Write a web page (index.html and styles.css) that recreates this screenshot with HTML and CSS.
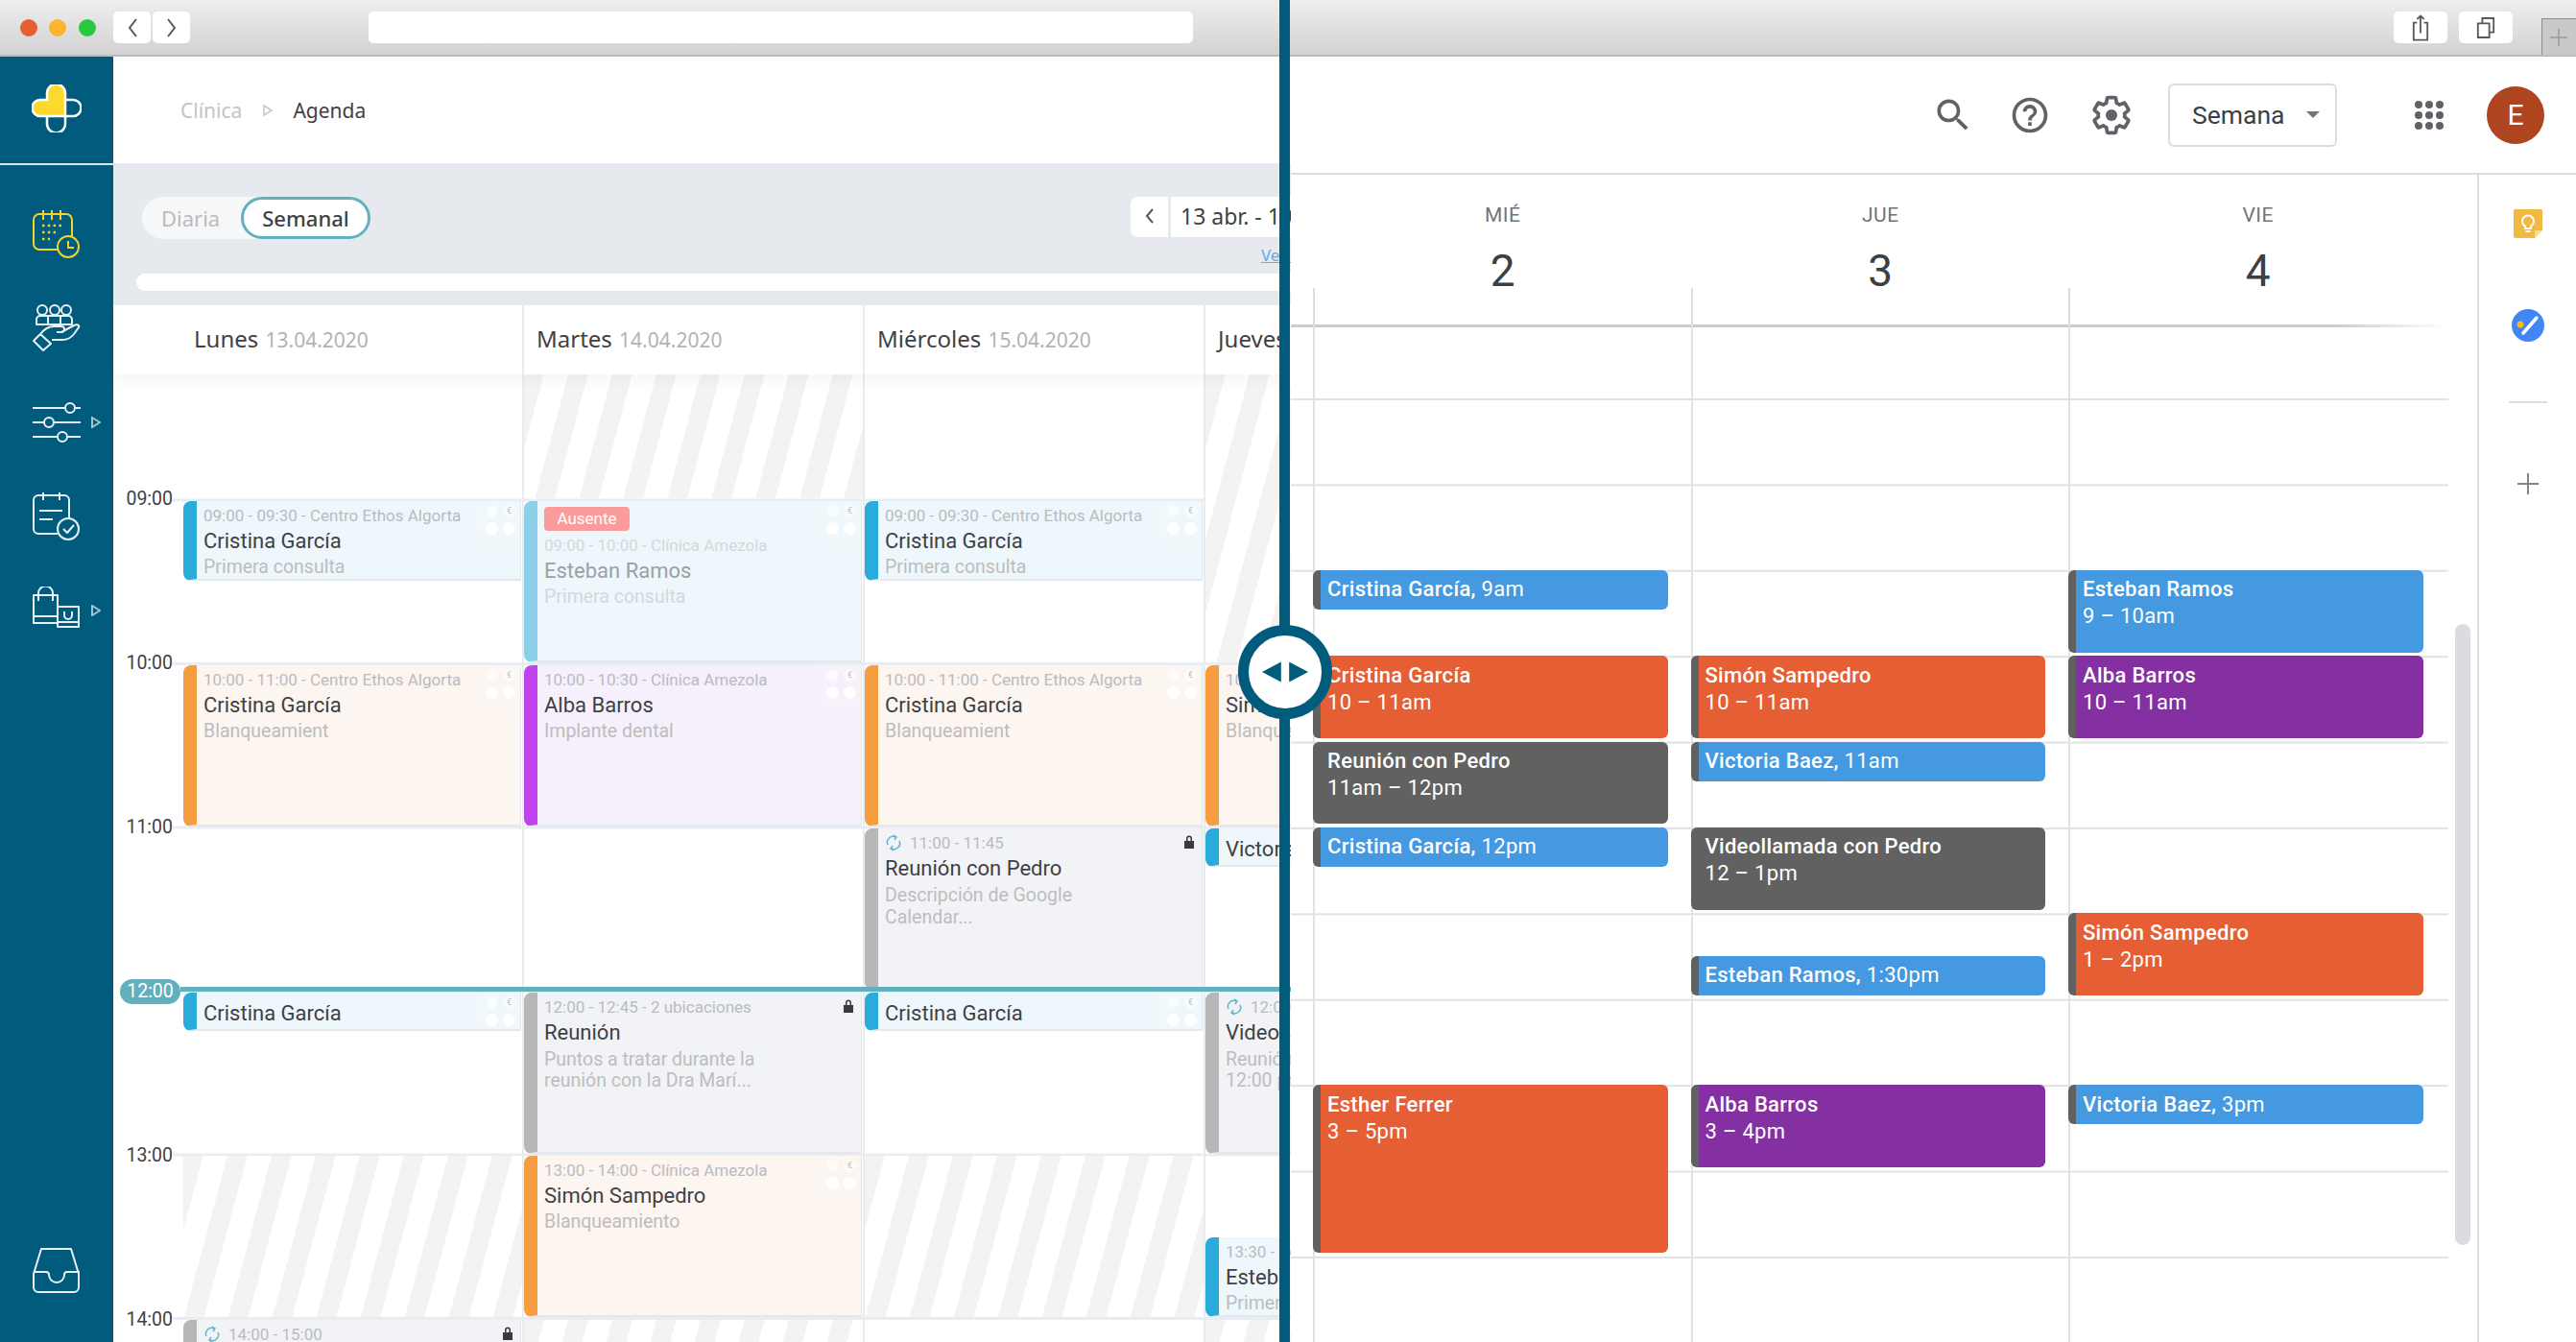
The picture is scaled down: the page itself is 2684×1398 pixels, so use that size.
FILE: index.html
```html
<!DOCTYPE html>
<html lang="es">
<head>
  <meta charset="UTF-8">
  <title>Agenda</title>
  <link rel="stylesheet" href="styles.css">
</head>
<body>
<div class="window">
  <!-- Browser chrome -->
  <div class="chrome">
    <span class="light red"></span><span class="light yellow"></span><span class="light green"></span>
    <div class="nav-btns">
      <button class="chrome-btn narrow"><svg width="14" height="24" viewBox="0 0 14 24"><path d="M11 3 4 12l7 9"/></svg></button>
      <button class="chrome-btn narrow"><svg width="14" height="24" viewBox="0 0 14 24"><path d="M3 3l7 9-7 9"/></svg></button>
    </div>
    <div class="address"></div>
    <button class="chrome-btn wide share"><svg width="18" height="30" viewBox="0 0 20 32"><path d="M6 10H2v20h16V10h-4M10 22V2M6 6l4-4 4 4"/></svg></button>
    <button class="chrome-btn wide tabs"><svg width="20" height="26" viewBox="0 0 22 28"><path d="M2 9h13v16H2zM7 9V3h13v16h-5"/></svg></button>
    <div class="new-tab"><svg width="20" height="20" viewBox="0 0 20 20"><path d="M10 1v18M1 10h18"/></svg></div>
  </div>

  <div class="panels">
    <!-- Clinic agenda -->
    <section class="clinic">
      <aside class="sidebar">
        <div class="logo-box">
          <svg width="52" height="50" viewBox="0 0 52 50" class="logo">
            <path class="logo-lines" d="M35 16h8a8.5 8.5 0 0 1 0 17H35M16 33v8a9.5 9.5 0 0 0 19 0V33"/>
            <path class="logo-heart" d="M35 33H9a8.5 8.5 0 0 1 0-17h7V9a9.5 9.5 0 0 1 19 0z"/>
          </svg>
        </div>
        <nav class="side-nav">
          <div class="nav-item">
            <svg class="ico yellow-ico" width="50" height="50" viewBox="0 0 50 50">
              <path d="M26 41H7a6 6 0 0 1-6-6V10a6 6 0 0 1 6-6h28a6 6 0 0 1 6 6v18M11 0v10M20 0v10M29 0v10"/>
              <path class="dash" d="M10 16h20M10 23h14M10 30h8"/>
              <circle cx="37" cy="38" r="11"/><path d="M37 32v7h6"/>
            </svg>
          </div>
          <div class="nav-item">
            <svg class="ico" width="50" height="50" viewBox="0 0 50 50">
              <circle cx="10" cy="6" r="5"/><circle cx="23" cy="6" r="5"/><circle cx="35" cy="6" r="5"/>
              <path d="M4 21v-5a4 4 0 0 1 4-4h29a4 4 0 0 1 4 4v5zM16 12v9M29 12v9"/>
              <path d="M1 38l7-7 11 10-8 7zM8 31c4-5 9-8 14-8h8c2 0 3 1 3 3s-1 3-3 3h-5M30 29l13-7c3-2 6 0 5 2l-5 7c-3 4-7 6-12 6H20"/>
            </svg>
          </div>
          <div class="nav-item">
            <svg class="ico" width="50" height="50" viewBox="0 0 50 50">
              <path d="M0 10h34M44 10h6M0 25h12M22 25h28M0 40h26M36 40h14"/>
              <circle cx="39" cy="10" r="5"/><circle cx="17" cy="25" r="5"/><circle cx="31" cy="40" r="5"/>
            </svg>
            <svg class="nav-arrow" width="10" height="12" viewBox="0 0 10 12"><path d="M1 1l8 5-8 5z"/></svg>
          </div>
          <div class="nav-item">
            <svg class="ico" width="50" height="50" viewBox="0 0 50 50">
              <path d="M26 43H6a5 5 0 0 1-5-5V8a5 5 0 0 1 5-5h27a5 5 0 0 1 5 5v19M11 0v8M28 0v8M7 19h24M7 28h14"/>
              <circle cx="37" cy="38" r="11"/><path d="M32 38l4 4 7-8"/>
            </svg>
          </div>
          <div class="nav-item">
            <svg class="ico" width="50" height="50" viewBox="0 3 50 50">
              <path d="M26 12H1v29h24M1 34h24M6 18v-8a7.5 7.5 0 0 1 15 0v8M6 12h20v12"/>
              <path d="M26 24h22v21H26zM26 40h22M33 29v4a4 4 0 0 0 8 0v-4"/>
            </svg>
            <svg class="nav-arrow" width="10" height="12" viewBox="0 0 10 12"><path d="M1 1l8 5-8 5z"/></svg>
          </div>
        </nav>
        <div class="nav-bottom">
          <svg class="ico" width="50" height="50" viewBox="0 0 50 50">
            <path d="M9 1h31l8 26v14a5 5 0 0 1-5 5H6a5 5 0 0 1-5-5V27z"/>
            <path d="M1 25h13c2 0 3 1 3 3a8 8 0 0 0 16 0c0-2 1-3 3-3h13"/>
          </svg>
          <div class="nav-peek"></div>
        </div>
      </aside>

      <div class="clinic-main">
        <header class="crumbs">
          <span class="crumb-muted">Clínica</span>
          <svg class="crumb-arrow" width="10" height="12" viewBox="0 0 10 12"><path d="M1 1l8 5-8 5z"/></svg>
          <span class="crumb-current">Agenda</span>
        </header>

        <div class="toolbar">
          <div class="toolbar-row">
            <div class="toggle">
              <span class="toggle-off">Diaria</span>
              <span class="toggle-on">Semanal</span>
            </div>
            <div class="week-nav">
              <div class="week-btns">
                <button class="week-prev"><svg width="12" height="20" viewBox="0 0 12 20"><path d="M9 3 3 10l6 7"/></svg></button>
                <div class="week-label">13 abr. - 19 abr.</div>
              </div>
              <a class="week-link">Ver agenda</a>
            </div>
          </div>
          <div class="h-scroll"></div>
        </div>

        <div class="week-head">
          <div class="wh first">Lunes <small>13.04.2020</small></div>
          <div class="wh">Martes <small>14.04.2020</small></div>
          <div class="wh">Miércoles <small>15.04.2020</small></div>
          <div class="wh">Jueves <small>16.04.2020</small></div>
        </div>

        <div class="week-body">
          <div class="hours">
            <div class="hour first">09:00</div>
            <div class="hour">10:00</div>
            <div class="hour">11:00</div>
            <div class="hour"><span class="now-pill">12:00</span></div>
            <div class="hour">13:00</div>
            <div class="hour">14:00</div>
          </div>

          <!-- Lunes -->
          <div class="day">
            <div class="ev cyan" style="grid-row:2/4">
              <div class="ev-time">09:00 - 09:30 - Centro Ethos Algorta</div>
              <div class="ev-name">Cristina García</div>
              <div class="ev-sub">Primera consulta</div>
              <div class="dots"><i class="d-ring"></i><i>€</i><i></i><i></i></div>
            </div>
            <div class="ev orange" style="grid-row:6/10">
              <div class="ev-time">10:00 - 11:00 - Centro Ethos Algorta</div>
              <div class="ev-name">Cristina García</div>
              <div class="ev-sub">Blanqueamient</div>
              <div class="dots"><i class="d-ring"></i><i>€</i><i></i><i></i></div>
            </div>
            <div class="ev cyan single" style="grid-row:14/15">
              <div class="ev-name">Cristina García</div>
              <div class="dots"><i class="d-ring"></i><i>€</i><i></i><i></i></div>
            </div>
            <div class="off" style="grid-row:18/22"></div>
            <div class="ev grey" style="grid-row:22/26">
              <div class="ev-time"><svg class="sync" width="18" height="18" viewBox="0 0 18 18"><path d="M3 11a6 6 0 0 1 8-8M15 7a6 6 0 0 1-8 8M9 1l3 2-2 3M9 17l-3-2 2-3"/></svg>14:00 - 15:00</div>
              <svg class="lock" width="12" height="16" viewBox="0 0 12 16"><path d="M3 7V4.5a3 3 0 0 1 6 0V7h2v8H1V7zM4.5 7h3V4.5a1.5 1.5 0 0 0-3 0z"/></svg>
            </div>
          </div>

          <!-- Martes -->
          <div class="day">
            <div class="off" style="grid-row:1/2"></div>
            <div class="ev cyan faded" style="grid-row:2/6">
              <span class="badge">Ausente</span>
              <div class="ev-time">09:00 - 10:00 - Clínica Amezola</div>
              <div class="ev-name">Esteban Ramos</div>
              <div class="ev-sub">Primera consulta</div>
              <div class="dots"><i class="d-ring"></i><i>€</i><i></i><i></i></div>
            </div>
            <div class="ev purple" style="grid-row:6/10">
              <div class="ev-time">10:00 - 10:30 - Clínica Amezola</div>
              <div class="ev-name">Alba Barros</div>
              <div class="ev-sub">Implante dental</div>
              <div class="dots"><i class="d-ring"></i><i>€</i><i></i><i></i></div>
            </div>
            <div class="ev grey" style="grid-row:14/18">
              <div class="ev-time">12:00 - 12:45 - 2 ubicaciones</div>
              <div class="ev-name">Reunión</div>
              <div class="ev-desc">Puntos a tratar durante la<br>reunión con la Dra Marí...</div>
              <svg class="lock" width="12" height="16" viewBox="0 0 12 16"><path d="M3 7V4.5a3 3 0 0 1 6 0V7h2v8H1V7zM4.5 7h3V4.5a1.5 1.5 0 0 0-3 0z"/></svg>
            </div>
            <div class="ev orange" style="grid-row:18/22">
              <div class="ev-time">13:00 - 14:00 - Clínica Amezola</div>
              <div class="ev-name">Simón Sampedro</div>
              <div class="ev-sub">Blanqueamiento</div>
              <div class="dots"><i class="d-ring"></i><i>€</i><i></i><i></i></div>
            </div>
            <div class="off" style="grid-row:22/26"></div>
          </div>

          <!-- Miércoles -->
          <div class="day">
            <div class="ev cyan" style="grid-row:2/4">
              <div class="ev-time">09:00 - 09:30 - Centro Ethos Algorta</div>
              <div class="ev-name">Cristina García</div>
              <div class="ev-sub">Primera consulta</div>
              <div class="dots"><i class="d-ring"></i><i>€</i><i></i><i></i></div>
            </div>
            <div class="ev orange" style="grid-row:6/10">
              <div class="ev-time">10:00 - 11:00 - Centro Ethos Algorta</div>
              <div class="ev-name">Cristina García</div>
              <div class="ev-sub">Blanqueamient</div>
              <div class="dots"><i class="d-ring"></i><i>€</i><i></i><i></i></div>
            </div>
            <div class="ev grey" style="grid-row:10/14">
              <div class="ev-time"><svg class="sync" width="18" height="18" viewBox="0 0 18 18"><path d="M3 11a6 6 0 0 1 8-8M15 7a6 6 0 0 1-8 8M9 1l3 2-2 3M9 17l-3-2 2-3"/></svg>11:00 - 11:45</div>
              <div class="ev-name">Reunión con Pedro</div>
              <div class="ev-desc">Descripción de Google<br>Calendar...</div>
              <svg class="lock" width="12" height="16" viewBox="0 0 12 16"><path d="M3 7V4.5a3 3 0 0 1 6 0V7h2v8H1V7zM4.5 7h3V4.5a1.5 1.5 0 0 0-3 0z"/></svg>
            </div>
            <div class="ev cyan single" style="grid-row:14/15">
              <div class="ev-name">Cristina García</div>
              <div class="dots"><i class="d-ring"></i><i>€</i><i></i><i></i></div>
            </div>
            <div class="off" style="grid-row:18/22"></div>
          </div>

          <!-- Jueves -->
          <div class="day">
            <div class="off" style="grid-row:1/6"></div>
            <div class="ev orange" style="grid-row:6/10">
              <div class="ev-time">10:00 - 11:00 - Centro Ethos Algorta</div>
              <div class="ev-name">Simón Sampedro</div>
              <div class="ev-sub">Blanqueamiento</div>
            </div>
            <div class="ev cyan single" style="grid-row:10/11">
              <div class="ev-name">Victoria Baez</div>
            </div>
            <div class="ev grey" style="grid-row:14/18">
              <div class="ev-time"><svg class="sync" width="18" height="18" viewBox="0 0 18 18"><path d="M3 11a6 6 0 0 1 8-8M15 7a6 6 0 0 1-8 8M9 1l3 2-2 3M9 17l-3-2 2-3"/></svg>12:00 - 13:00</div>
              <div class="ev-name">Videollamada con Pedro</div>
              <div class="ev-desc">Reunión con Pedro<br>12:00 pm</div>
            </div>
            <div class="ev cyan" style="grid-row:20/22">
              <div class="ev-time">13:30 - 14:00</div>
              <div class="ev-name">Esteban Ramos</div>
              <div class="ev-sub">Primera consulta</div>
            </div>
            <div class="off" style="grid-row:22/26"></div>
          </div>

          <div class="now-line"></div>
        </div>
      </div>
    </section>

    <!-- Google calendar -->
    <section class="gcal">
      <header class="gcal-top">
        <svg class="g-ico" width="44" height="44" viewBox="0 0 24 24"><path d="M15.5 14h-.79l-.28-.27C15.41 12.59 16 11.11 16 9.5 16 5.91 13.09 3 9.5 3S3 5.91 3 9.5 5.91 16 9.5 16c1.61 0 3.09-.59 4.23-1.57l.27.28v.79l5 4.99L20.49 19l-4.99-5zm-6 0C7.01 14 5 11.99 5 9.5S7.01 5 9.5 5 14 7.01 14 9.5 11.99 14 9.5 14z"/></svg>
        <svg class="g-ico help" width="44" height="44" viewBox="0 0 24 24"><path d="M11 18h2v-2h-2v2zm1-16C6.48 2 2 6.48 2 12s4.48 10 10 10 10-4.48 10-10S17.52 2 12 2zm0 18c-4.41 0-8-3.59-8-8s3.59-8 8-8 8 3.59 8 8-3.59 8-8 8zm0-14c-2.21 0-4 1.79-4 4h2c0-1.1.9-2 2-2s2 .9 2 2c0 2-3 1.75-3 5h2c0-2.25 3-2.5 3-5 0-2.21-1.79-4-4-4z"/></svg>
        <svg class="g-ico gear" width="44" height="44" viewBox="0 0 24 24"><path class="gear-out" d="M19.43 12.98c.04-.32.07-.64.07-.98s-.03-.66-.07-.98l2.11-1.65c.19-.15.24-.42.12-.64l-2-3.46c-.12-.22-.39-.3-.61-.22l-2.49 1c-.52-.4-1.08-.73-1.69-.98l-.38-2.65C14.46 2.18 14.25 2 14 2h-4c-.25 0-.46.18-.49.42l-.38 2.65c-.61.25-1.17.59-1.69.98l-2.49-1c-.23-.09-.49 0-.61.22l-2 3.46c-.13.22-.07.49.12.64l2.11 1.65c-.04.32-.07.65-.07.98s.03.66.07.98l-2.11 1.65c-.19.15-.24.42-.12.64l2 3.46c.12.22.39.3.61.22l2.49-1c.52.4 1.08.73 1.69.98l.38 2.65c.03.24.24.42.49.42h4c.25 0 .46-.18.49-.42l.38-2.65c.61-.25 1.17-.59 1.69-.98l2.49 1c.23.09.49 0 .61-.22l2-3.46c.12-.22.07-.49-.12-.64l-2.11-1.65z"/><circle cx="12" cy="12" r="3.3"/></svg>
        <div class="view-select">Semana<span class="caret"></span></div>
        <div class="apps"><i></i><i></i><i></i><i></i><i></i><i></i><i></i><i></i><i></i></div>
        <div class="avatar">E</div>
      </header>

      <div class="gcal-main">
        <div class="gcal-grid">
          <div class="g-heads">
            <div class="g-head"><span>MIÉ</span><b>2</b></div>
            <div class="g-head"><span>JUE</span><b>3</b></div>
            <div class="g-head"><span>VIE</span><b>4</b></div>
          </div>
          <div class="g-body">
            <div class="g-rows">
              <div class="g-col">
                <div class="g-ev blue" style="grid-row:10/12"><b>Cristina García,</b> 9am</div>
                <div class="g-ev red" style="grid-row:14/18"><b>Cristina García</b><br>10 – 11am</div>
                <div class="g-ev dark" style="grid-row:18/22"><b>Reunión con Pedro</b><br>11am – 12pm</div>
                <div class="g-ev blue" style="grid-row:22/24"><b>Cristina García,</b> 12pm</div>
                <div class="g-ev red" style="grid-row:34/42"><b>Esther Ferrer</b><br>3 – 5pm</div>
              </div>
              <div class="g-col">
                <div class="g-ev red" style="grid-row:14/18"><b>Simón Sampedro</b><br>10 – 11am</div>
                <div class="g-ev blue" style="grid-row:18/20"><b>Victoria Baez,</b> 11am</div>
                <div class="g-ev dark" style="grid-row:22/26"><b>Videollamada con Pedro</b><br>12 – 1pm</div>
                <div class="g-ev blue" style="grid-row:28/30"><b>Esteban Ramos,</b> 1:30pm</div>
                <div class="g-ev violet" style="grid-row:34/38"><b>Alba Barros</b><br>3 – 4pm</div>
              </div>
              <div class="g-col">
                <div class="g-ev blue" style="grid-row:10/14"><b>Esteban Ramos</b><br>9 – 10am</div>
                <div class="g-ev violet" style="grid-row:14/18"><b>Alba Barros</b><br>10 – 11am</div>
                <div class="g-ev red" style="grid-row:26/30"><b>Simón Sampedro</b><br>1 – 2pm</div>
                <div class="g-ev blue" style="grid-row:34/36"><b>Victoria Baez,</b> 3pm</div>
              </div>
            </div>
            <div class="g-scroll"></div>
          </div>
        </div>

        <aside class="g-side">
          <svg width="30" height="30" viewBox="0 0 30 30" class="keep">
            <path class="keep-note" d="M2 0h26a2 2 0 0 1 2 2v20l-8 8H2a2 2 0 0 1-2-2V2a2 2 0 0 1 2-2z"/>
            <path class="keep-fold" d="M30 22h-8v8z"/>
            <path class="keep-bulb" d="M12 20v-2.5c-2-1.2-3-3-3-5a6 6 0 0 1 12 0c0 2-1 3.8-3 5V20zM12.5 23h5"/>
          </svg>
          <svg width="34" height="34" viewBox="0 0 34 34" class="tasks">
            <circle class="tasks-bg" cx="17" cy="17" r="17"/>
            <circle class="tasks-dot" cx="9" cy="16" r="3.5"/>
            <path class="tasks-tick" d="M12 25 26 9"/>
          </svg>
          <div class="side-rule"></div>
          <svg width="24" height="24" viewBox="0 0 24 24" class="side-plus"><path d="M12 1v22M1 12h22"/></svg>
        </aside>
      </div>
    </section>

    <!-- Before / after slider -->
    <div class="divider"></div>
    <div class="handle">
      <svg width="48" height="24" viewBox="0 0 46 22"><path d="M0 11 19 1v20zM27 1l19 10-19 10z"/></svg>
    </div>
  </div>
</div>
</body>
</html>
```

FILE: styles.css
```css
/* Side by side agenda comparison */
* {
  box-sizing: border-box;
}
body {
  margin: 0;
  background: #fff;
  color: #3f4144;
  font-family: "Noto Sans", sans-serif;
  overflow: hidden;
}
.window {
  width: 2684px;
  height: 1398px;
  display: flex;
  flex-direction: column;
  overflow: hidden;
}

/* browser chrome */
.chrome {
  height: 59px;
  flex: none;
  display: flex;
  align-items: flex-start;
  padding: 12px 0 0 21px;
  background: linear-gradient(#eeeeee, #d2d2d2);
  border-bottom: 2px solid #b7bbc2;
}
.light {
  width: 18px;
  height: 18px;
  border-radius: 50%;
  margin: 8px 12.5px 0 0;
}
.red { background: #fb5f57; }
.yellow { background: #fdb52f; }
.green { background: #28c940; }
.nav-btns {
  display: flex;
  gap: 2px;
  margin-left: 6px;
}
.chrome-btn {
  height: 33px;
  border: none;
  border-radius: 5px;
  background: #fff;
  padding: 0;
  display: flex;
  align-items: center;
  justify-content: center;
}
.chrome-btn svg {
  fill: none;
  stroke: #55585c;
  stroke-width: 2;
}
.chrome-btn.narrow { width: 39px; }
.chrome-btn.wide { width: 56px; }
.address {
  width: 859px;
  height: 33px;
  margin-left: 186px;
  background: #fff;
  border-radius: 5px;
}
.share { margin-left: 1251px; }
.tabs { margin-left: 12px; }
.new-tab {
  width: 36px;
  height: 38px;
  margin: 7px 0 0 30px;
  background: #c9c9c9;
  border: 1px solid #8c8c8c;
  border-right: none;
  border-bottom: none;
  display: flex;
  align-items: center;
  justify-content: center;
}
.new-tab svg {
  fill: none;
  stroke: #999;
  stroke-width: 1.5;
}

.panels {
  flex: 1;
  display: flex;
  position: relative;
  min-height: 0;
}

/* left panel */
.clinic {
  width: 1345px;
  flex: none;
  display: flex;
  overflow: hidden;
}
.sidebar {
  width: 118px;
  flex: none;
  background: #005b7d;
  display: flex;
  flex-direction: column;
}
.logo-box {
  height: 113px;
  flex: none;
  border-bottom: 2px solid #dce5ea;
  padding: 29px 0 0 33px;
}
.logo-lines {
  fill: none;
  stroke: #fff;
  stroke-width: 2.5;
}
.logo-heart {
  fill: #fbd92f;
  stroke: #fff;
  stroke-width: 2.5;
}
.side-nav {
  display: flex;
  flex-direction: column;
  gap: 48px;
  padding-top: 47px;
}
.nav-item {
  display: flex;
  align-items: center;
  gap: 11px;
  padding-left: 34px;
}
.ico {
  flex: none;
  fill: none;
  stroke: #e8f1f5;
  stroke-width: 2;
  stroke-linejoin: round;
}
.yellow-ico { stroke: #f3d32c; }
.dash {
  stroke-dasharray: 2.5 3.3;
  stroke-width: 2.5;
}
.nav-arrow {
  fill: none;
  stroke: #a5c4d2;
  stroke-width: 2;
}
.nav-bottom {
  margin-top: auto;
  padding-left: 34px;
  height: 98px;
}
.nav-peek {
  width: 12px;
  height: 3px;
  margin: 45px 0 0 18px;
  border-top: 2px solid #fff;
  border-radius: 50% 50% 0 0;
}
.clinic-main {
  flex: 1;
  min-width: 0;
  display: flex;
  flex-direction: column;
}
.crumbs {
  height: 111px;
  flex: none;
  background: #fff;
  display: flex;
  align-items: center;
  padding-left: 70px;
  font-size: 21px;
}
.crumb-muted { color: #c4c4c4; }
.crumb-arrow {
  margin: 0 21px 0 22px;
  fill: none;
  stroke: #c4c4c4;
  stroke-width: 1.5;
}
.crumb-current { color: #3f4144; }
.toolbar {
  height: 148px;
  flex: none;
  background: #e6e9ee;
  padding-top: 35px;
}
.toolbar-row {
  height: 80px;
  display: flex;
  padding-left: 30px;
}
.toggle {
  width: 238px;
  height: 44px;
  flex: none;
  background: #f6f7f9;
  border-radius: 22px;
  display: flex;
  align-items: center;
  justify-content: space-between;
  font-size: 22px;
}
.toggle-off {
  color: #bbb;
  padding-left: 20px;
}
.toggle-on {
  width: 135px;
  height: 44px;
  background: #fff;
  border: 3px solid #62b0be;
  border-radius: 22px;
  color: #3f4144;
  font-weight: 500;
  display: flex;
  align-items: center;
  justify-content: center;
}
.week-nav {
  margin-left: 792px;
  display: flex;
  flex-direction: column;
  flex: none;
}
.week-btns {
  display: flex;
  gap: 3px;
  height: 42px;
}
.week-prev {
  width: 39px;
  border: none;
  padding: 0;
  background: #fff;
  border-radius: 8px 0 0 8px;
}
.week-prev svg {
  fill: none;
  stroke: #55585c;
  stroke-width: 2;
}
.week-label {
  width: 220px;
  background: #fff;
  padding-left: 10px;
  font-size: 23px;
  line-height: 40px;
  color: #3f4144;
  white-space: nowrap;
}
.week-link {
  margin: 7px 0 0 136px;
  font-size: 17px;
  color: #6aa9e6;
  text-decoration: underline;
  white-space: nowrap;
}
.h-scroll {
  height: 18px;
  margin-left: 24px;
  background: #fff;
  border-radius: 9px 0 0 9px;
}
.week-head {
  height: 72px;
  flex: none;
  display: flex;
  background: #fff;
  border-radius: 8px 0 0 0;
  box-shadow: 0 8px 14px rgba(0, 0, 0, 0.035);
  position: relative;
  z-index: 1;
}
.wh {
  width: 355px;
  flex: none;
  padding-left: 13px;
  border-right: 2px solid #e8ebef;
  font-size: 24px;
  line-height: 70px;
  color: #3f4144;
  white-space: nowrap;
}
.wh.first {
  width: 428px;
  padding-left: 84px;
}
.wh small {
  font-size: 21px;
  color: #b3b3b3;
  margin-left: 1px;
}
.week-body {
  flex: 1;
  min-height: 0;
  display: flex;
  background: #fff;
  position: relative;
  font-family: Roboto, sans-serif;
}
.hours {
  width: 73px;
  flex: none;
  background: linear-gradient(#e9ecf0 3px, transparent 3px) right 129.5px / 11px 170.5px repeat-y;
}
.hour {
  height: 171px;
  padding-right: 11px;
  text-align: right;
  font-size: 19.5px;
  line-height: 24px;
  color: #3f4144;
}
.hour.first {
  height: 288.5px;
  padding-top: 117.5px;
}
.now-pill {
  display: inline-block;
  width: 63px;
  height: 26px;
  margin: -6px -8px 0 0;
  background: #62b0be;
  border-radius: 13px;
  color: #fff;
  text-align: center;
  line-height: 26px;
  position: relative;
  z-index: 2;
}
.day {
  width: 355px;
  flex: none;
  display: grid;
  grid-template-rows: 132px repeat(32, 42.625px);
  grid-auto-rows: 42.625px;
  border-right: 2px solid #e8ebef;
  background: linear-gradient(#e9ecf0 3px, transparent 3px) 0 129.5px / 100% 170.5px;
}
.off {
  grid-column: 1;
  margin-bottom: 3px;
  background: repeating-linear-gradient(105deg, #f4f3f3 0, #f4f3f3 20px, #fff 20px, #fff 44.4px);
}
.ev {
  grid-column: 1;
  position: relative;
  margin: 0 1px 2.5px 0;
  padding: 5px 4px 0 7px;
  border-left: 14px solid;
  border-right: 1px solid #e4e7eb;
  border-bottom: 2px solid #e4e7eb;
  border-radius: 8px 0 0 8px;
  overflow: hidden;
  white-space: nowrap;
}
.cyan { background: #eef7fb; border-left-color: #29acd9; }
.orange { background: #fcf5f0; border-left-color: #f79d41; }
.purple { background: #f6effc; border-left-color: #bf44f0; }
.grey { background: #f2f3f6; border-left-color: #b7b7b7; }
.ev-time {
  height: 20px;
  margin-bottom: 2px;
  font-size: 17px;
  line-height: 20px;
  color: #b9bcc0;
  display: flex;
  align-items: center;
}
.ev-name {
  font-size: 22px;
  line-height: 30px;
  color: #3f4144;
}
.ev-sub,
.ev-desc {
  font-size: 19.5px;
  line-height: 22.5px;
  color: #bdbdbd;
}
.ev-sub { margin-top: 1px; }
.ev-desc { margin-top: 2px; }
.ev.single {
  padding-top: 7px;
}
.faded { border-left-color: #8bd0e8; }
.faded .ev-time,
.faded .ev-sub { color: #d5d7d9; }
.faded .ev-name { color: #9da0a3; }
.badge {
  display: block;
  width: 89px;
  height: 25px;
  margin: 1px 0 5px;
  background: #fb9c9c;
  border-radius: 4px;
  color: #fff;
  font-size: 17px;
  line-height: 25px;
  text-align: center;
}
.dots {
  position: absolute;
  top: 4px;
  right: 5px;
  display: grid;
  grid-template-columns: 13px 13px;
  gap: 5px;
  box-shadow: 0 0 16px 10px rgba(255, 255, 255, 0.22);
}
.dots i {
  width: 13px;
  height: 13px;
  border-radius: 50%;
  background: #fff;
  font-style: normal;
  font-size: 9px;
  line-height: 13px;
  text-align: center;
  color: #bbb;
}
.dots i:nth-child(-n+2) {
  background: rgba(255, 255, 255, 0.55);
}
.dots .d-ring {
  border: 3px solid transparent;
  background: #c8c8c8 content-box;
  box-shadow: inset 0 0 0 2px rgba(255, 255, 255, 0.7);
}
.sync {
  fill: none;
  stroke: #62b7cc;
  stroke-width: 1.5;
  margin-right: 8px;
  flex: none;
}
.lock {
  position: absolute;
  top: 6px;
  right: 7px;
  fill: #3a3a3a;
  fill-rule: evenodd;
}
.now-line {
  position: absolute;
  top: 638px;
  left: 70px;
  right: 0;
  height: 5px;
  background: #62b0be;
  z-index: 1;
}

/* right panel */
.gcal {
  flex: 1;
  min-width: 0;
  display: flex;
  flex-direction: column;
  background: #fff;
}
.gcal-top {
  height: 123px;
  flex: none;
  display: flex;
  align-items: center;
  justify-content: flex-end;
  padding-right: 33px;
  border-bottom: 2px solid #dadce0;
}
.g-ico { fill: #5f6368; flex: none; }
.help { margin: 0 41px 0 36px; }
.gear-out {
  fill: none;
  stroke: #5f6368;
  stroke-width: 2;
}
.view-select {
  width: 176px;
  height: 66px;
  margin-left: 37.5px;
  padding-left: 23px;
  border: 2px solid #dadce0;
  border-radius: 6px;
  font-family: Roboto, sans-serif;
  font-size: 26.5px;
  color: #3c4043;
  display: flex;
  align-items: center;
}
.caret {
  margin-left: 22px;
  border-top: 7px solid #70757a;
  border-left: 7px solid transparent;
  border-right: 7px solid transparent;
}
.apps {
  margin-left: 81px;
  display: grid;
  grid-template-columns: repeat(3, 8px);
  gap: 3px;
}
.apps i {
  width: 8px;
  height: 8px;
  border-radius: 50%;
  background: #5f6368;
}
.avatar {
  width: 60px;
  height: 60px;
  margin-left: 45px;
  border-radius: 50%;
  background: #ae4420;
  color: #fff;
  font-family: Roboto, sans-serif;
  font-size: 30px;
  text-align: center;
  line-height: 60px;
}
.gcal-main {
  flex: 1;
  min-height: 0;
  display: flex;
}
.gcal-grid {
  flex: 1;
  min-width: 0;
  display: flex;
  flex-direction: column;
  font-family: Roboto, sans-serif;
}
.g-heads {
  height: 156px;
  flex: none;
  width: 1206px;
  padding-left: 23px;
  display: flex;
}
.g-head {
  width: 393.5px;
  flex: none;
  display: flex;
  flex-direction: column;
  align-items: center;
  padding: 30px 0 0 2px;
  background: linear-gradient(#dadce0, #dadce0) 0 100% / 2px 38px no-repeat;
}
.g-head span {
  font-size: 21px;
  letter-spacing: 0.5px;
  line-height: 24px;
  color: #70757a;
}
.g-head b {
  margin-top: 17px;
  font-size: 46px;
  font-weight: 400;
  line-height: 58px;
  color: #3c4043;
}
.g-body {
  flex: 1;
  min-height: 0;
  display: flex;
}
.g-rows {
  width: 1206px;
  flex: none;
  padding-left: 23px;
  display: flex;
  background:
    linear-gradient(to right, #cbccce 90%, transparent) 0 0 / 100% 3px no-repeat,
    linear-gradient(#e0e2e6 2px, transparent 2px) 0 77px / 100% 89.4px;
}
.g-col {
  width: 393.5px;
  flex: none;
  display: grid;
  grid-template-rows: 77px repeat(48, 22.35px);
  border-left: 2px solid #e0e2e6;
}
.g-ev {
  grid-column: 1;
  margin: 0 24px 3.5px -2px;
  padding: 6.5px 0 0 7px;
  border-left: 8px solid #616161;
  border-radius: 6px;
  color: #fff;
  font-size: 22px;
  letter-spacing: 0.3px;
  line-height: 28px;
  white-space: nowrap;
  overflow: hidden;
}
.g-ev b { font-weight: 500; }
.blue { background: #4499e1; }
.red { background: #e55e34; }
.dark { background: #616161; }
.violet { background: #8430a2; }
.g-scroll {
  width: 16px;
  height: 647px;
  margin: 312px 0 0 7px;
  flex: none;
  background: #dadce0;
  border-radius: 8px;
}
.g-side {
  width: 103px;
  flex: none;
  border-left: 2px solid #dadce0;
  display: flex;
  flex-direction: column;
  align-items: center;
  padding-top: 36px;
}
.keep-note { fill: #f0b93f; }
.keep-fold { fill: #f8dc97; }
.keep-bulb {
  fill: none;
  stroke: #fff;
  stroke-width: 1.8;
}
.tasks { margin-top: 74px; }
.tasks-bg { fill: #4285f4; }
.tasks-dot { fill: #fbbc04; }
.tasks-tick {
  fill: none;
  stroke: #fff;
  stroke-width: 3.5;
  stroke-linecap: round;
}
.side-rule {
  width: 40px;
  height: 2px;
  margin-top: 62px;
  background: #dadce0;
}
.side-plus {
  margin-top: 72px;
  fill: none;
  stroke: #80868b;
  stroke-width: 2;
}

/* slider */
.divider {
  position: absolute;
  left: 1333px;
  top: -59px;
  bottom: 0;
  width: 11px;
  background: #005b7d;
  z-index: 5;
}
.handle {
  position: absolute;
  left: 1290px;
  top: 592px;
  width: 98px;
  height: 98px;
  border: 11px solid #005b7d;
  border-radius: 50%;
  background: #fff;
  z-index: 6;
  display: flex;
  align-items: center;
  justify-content: center;
}
.handle svg { fill: #005b7d; }
```
